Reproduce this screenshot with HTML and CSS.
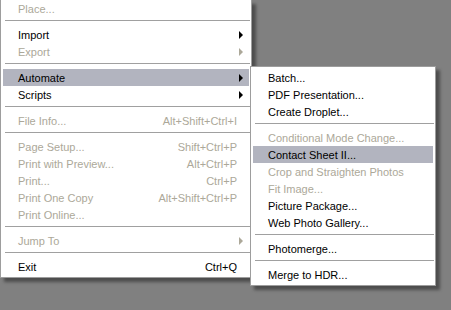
FILE: index.html
```html
<!DOCTYPE html>
<html lang="en">
<head>
    <meta charset="UTF-8">
    <title>File menu - Automate</title>
    <link rel="stylesheet" href="styles.css">
</head>
<body>

    <!-- File menu, opened; top part scrolled off screen -->
    <div class="menu main-menu">
        <div class="item disabled"><span class="label">Place...</span></div>
        <div class="sep"></div>
        <div class="item"><span class="label">Import</span><span class="arrow"></span></div>
        <div class="item disabled"><span class="label">Export</span><span class="arrow"></span></div>
        <div class="sep"></div>
        <div class="item active"><span class="label">Automate</span><span class="arrow"></span></div>
        <div class="item"><span class="label">Scripts</span><span class="arrow"></span></div>
        <div class="sep"></div>
        <div class="item disabled"><span class="label">File Info...</span><span class="key">Alt+Shift+Ctrl+I</span></div>
        <div class="sep"></div>
        <div class="item disabled"><span class="label">Page Setup...</span><span class="key">Shift+Ctrl+P</span></div>
        <div class="item disabled"><span class="label">Print with Preview...</span><span class="key">Alt+Ctrl+P</span></div>
        <div class="item disabled"><span class="label">Print...</span><span class="key">Ctrl+P</span></div>
        <div class="item disabled"><span class="label">Print One Copy</span><span class="key">Alt+Shift+Ctrl+P</span></div>
        <div class="item disabled"><span class="label">Print Online...</span></div>
        <div class="sep"></div>
        <div class="item disabled"><span class="label">Jump To</span><span class="arrow"></span></div>
        <div class="sep"></div>
        <div class="item"><span class="label">Exit</span><span class="key">Ctrl+Q</span></div>
    </div>

    <!-- Automate submenu -->
    <div class="menu sub-menu">
        <div class="item"><span class="label">Batch...</span></div>
        <div class="item"><span class="label">PDF Presentation...</span></div>
        <div class="item"><span class="label">Create Droplet...</span></div>
        <div class="sep"></div>
        <div class="item disabled"><span class="label">Conditional Mode Change...</span></div>
        <div class="item active"><span class="label">Contact Sheet II...</span></div>
        <div class="item disabled"><span class="label">Crop and Straighten Photos</span></div>
        <div class="item disabled"><span class="label">Fit Image...</span></div>
        <div class="item"><span class="label">Picture Package...</span></div>
        <div class="item"><span class="label">Web Photo Gallery...</span></div>
        <div class="sep"></div>
        <div class="item"><span class="label">Photomerge...</span></div>
        <div class="sep"></div>
        <div class="item"><span class="label">Merge to HDR...</span></div>
    </div>

</body>
</html>
```

FILE: styles.css
```css
body {
    margin: 0;
    background-color: #808080;
    font-family: 'Liberation Sans', Arial, sans-serif;
    font-size: 11px;
    color: #000;
    height: 310px;
    overflow: hidden;
    position: relative;
}
.menu {
    background-color: #fff;
    border: 1px solid #9d9d9d;
    padding: 2px;
    box-shadow: 4px 4px 3px rgba(0, 0, 0, 0.4);
    box-sizing: border-box;
}
.main-menu {
    width: 252px;
    border-top: none;
    padding-top: 0;
}
.sub-menu {
    position: absolute;
    left: 250px;
    top: 66px;
    width: 186px;
}
.item {
    display: flex;
    align-items: center;
    height: 17px;
    padding: 0 4px 0 15px;
}
.item .label {
    flex: 1;
    white-space: nowrap;
}
.item .key {
    margin-right: 8px;
    white-space: nowrap;
}
.item.active {
    background-color: #b2b4bf;
}
.item.disabled {
    color: #aca899;
}
.arrow {
    width: 0;
    height: 0;
    border-top: 4px solid transparent;
    border-bottom: 4px solid transparent;
    border-left: 4px solid #000;
    margin-right: 2px;
}
.item.disabled .arrow {
    border-left-color: #aca899;
}
.sep {
    height: 9px;
    box-sizing: border-box;
    padding-top: 3px;
    margin: 0 -1px 0 2px;
}
.sep::before {
    content: "";
    display: block;
    height: 1px;
    background-color: #a0a0a0;
}
```
